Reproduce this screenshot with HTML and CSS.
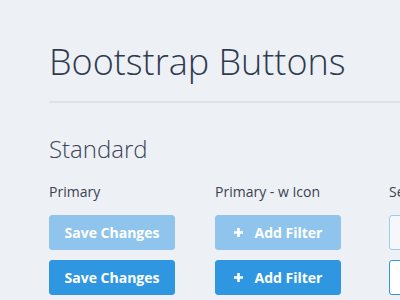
FILE: index.html
```html
<!DOCTYPE html>
<html lang="en">
<head>
  <meta charset="UTF-8">
  <meta name="viewport" content="width=device-width, initial-scale=1.0">
  <title>Bootstrap Buttons</title>
  <link rel="stylesheet" href="styles.css">
</head>
<body>
  <div class="page">
    <h1 class="title">Bootstrap Buttons</h1>

    <h2 class="section-title">Standard</h2>

    <div class="btn-grid">
      <div class="btn-col">
        <div class="col-label">Primary</div>
        <button class="btn btn-primary is-disabled">Save Changes</button>
        <button class="btn btn-primary">Save Changes</button>
      </div>

      <div class="btn-col">
        <div class="col-label">Primary - w Icon</div>
        <button class="btn btn-primary is-disabled">
          <svg class="btn-icon" width="9" height="9" viewBox="0 0 9 9"><path d="M4.5 0v9M0 4.5h9" stroke="#fff" stroke-width="2.6"/></svg>
          Add Filter
        </button>
        <button class="btn btn-primary">
          <svg class="btn-icon" width="9" height="9" viewBox="0 0 9 9"><path d="M4.5 0v9M0 4.5h9" stroke="#fff" stroke-width="2.6"/></svg>
          Add Filter
        </button>
      </div>

      <div class="btn-col">
        <div class="col-label">Secondary</div>
        <button class="btn btn-secondary is-disabled">Cancel</button>
        <button class="btn btn-secondary">Cancel</button>
      </div>
    </div>
  </div>
</body>
</html>
```

FILE: styles.css
```css
body {
  margin: 0;
  padding: 0;
  background-color: #edf0f5;
  font-family: "Open Sans", "Liberation Sans", sans-serif;
  overflow: hidden;
}

.page {
  padding: 37px 0 0 48px;
  width: 560px;
}

.title {
  margin: 0 0 0 1px;
  font-size: 36px;
  font-weight: 300;
  color: #2e3a4d;
  line-height: 50px;
  padding-bottom: 14px;
  border-bottom: 2px solid #dde1e8;
}

.section-title {
  margin: 30px 0 0 1px;
  font-size: 24px;
  font-weight: 300;
  color: #3b4658;
  line-height: 32px;
}

.btn-grid {
  display: grid;
  grid-template-columns: 166px 174px 166px;
  margin: 17px 0 0 1px;
}

.btn-col {
  display: flex;
  flex-direction: column;
  gap: 10px;
}

.col-label {
  font-size: 14px;
  color: #3b4352;
  line-height: 19px;
  margin-bottom: 4px;
}

.btn {
  display: flex;
  align-items: center;
  justify-content: center;
  gap: 12px;
  height: 35px;
  padding: 0;
  border-radius: 3px;
  font-family: "Open Sans", "Liberation Sans", sans-serif;
  font-size: 14px;
  font-weight: 700;
  cursor: pointer;
}

.btn-primary {
  width: 126px;
  background-color: #2f97e1;
  border: 1px solid #2f97e1;
  color: #ffffff;
}

.btn-primary.is-disabled {
  background-color: #8fc5ec;
  border-color: #8fc5ec;
}

.btn-icon {
  display: block;
}

.btn-secondary {
  width: 126px;
  background-color: #ffffff;
  border: 1px solid #2f97e1;
  color: #2f97e1;
}

.btn-secondary.is-disabled {
  background-color: #f5f7fa;
  border-color: #9ccbed;
  color: #9ccbed;
}
```
